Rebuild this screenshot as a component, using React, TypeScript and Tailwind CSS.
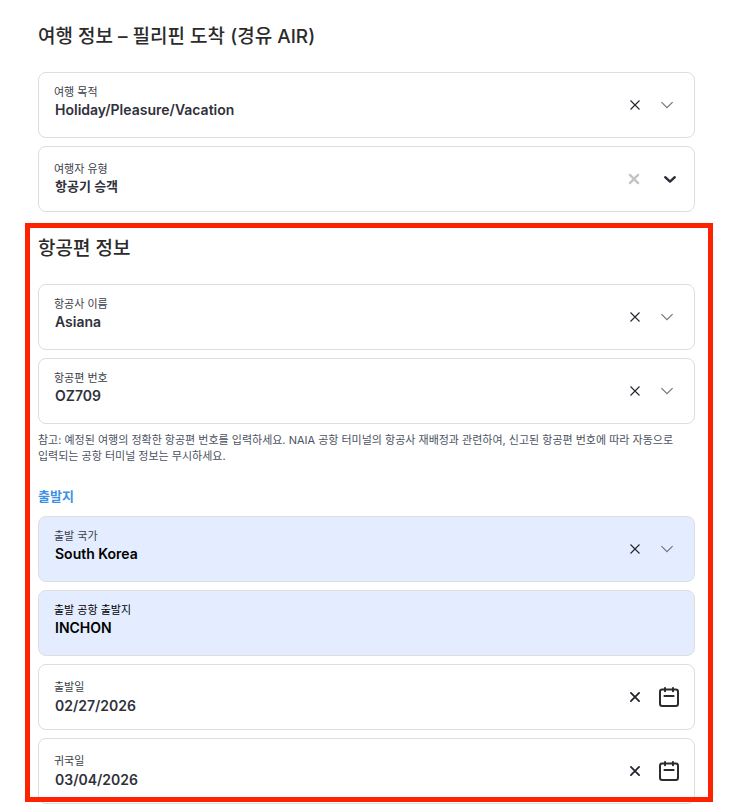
import { useState } from "react";
import type { ReactNode } from "react";
import clsx from "clsx";

type Variant = "picker" | "bold" | "date";

const cardPadding: Record<Variant, string> = {
  picker: "gap-5 pr-5",
  bold: "gap-[22px] pr-4",
  date: "gap-[18px] pr-[15px]",
};

const controlSize: Record<Variant, string> = {
  picker: "h-5 text-sm leading-5",
  bold: "h-[18px] text-[13px] leading-[18px]",
  date: "h-[22px] text-sm leading-[22px]",
};

function CrossIcon({ variant }: { variant: Variant }) {
  if (variant === "picker") {
    return (
      <svg className="h-[10px] w-[10px]" viewBox="0 0 10 10" fill="none" stroke="currentColor" strokeWidth="1.1" aria-hidden="true">
        <path d="M0.5 0.5 9.5 9.5M9.5 0.5 0.5 9.5" />
      </svg>
    );
  }
  return (
    <svg
      className="h-3 w-3"
      viewBox="0 0 12 12"
      fill="none"
      stroke="currentColor"
      strokeWidth={variant === "bold" ? 2.4 : 1.8}
      strokeLinecap="round"
      aria-hidden="true"
    >
      <path d="M1.9 1.9 10.1 10.1M10.1 1.9 1.9 10.1" />
    </svg>
  );
}

function TrailingIcon({ variant }: { variant: Variant }) {
  if (variant === "date") {
    return (
      <svg className="h-5 w-5" viewBox="0 0 20 20" fill="none" stroke="#2b2b2b" strokeWidth="2" strokeLinecap="round" aria-hidden="true">
        <rect x="1" y="2.6" width="18" height="16.4" rx="2.2" />
        <path d="M6 1V4.2M14 1V4.2M5.4 9H14.6" />
      </svg>
    );
  }
  if (variant === "bold") {
    return (
      <svg className="h-4 w-4" viewBox="0 0 16 16" fill="none" stroke="#2b2d38" strokeWidth="2.4" strokeLinecap="round" strokeLinejoin="round" aria-hidden="true">
        <path d="M3.2 6.2 8 10.6 12.8 6.2" />
      </svg>
    );
  }
  return (
    <svg className="h-[14px] w-[14px]" viewBox="0 0 14 14" fill="none" stroke="#77777d" strokeWidth="1.2" aria-hidden="true">
      <path d="M1.4 4.1 7 9.7 12.6 4.1" />
    </svg>
  );
}

interface FieldProps {
  id: string;
  label: string;
  initial: string;
  variant?: Variant;
  kind?: "select" | "text";
  filled?: boolean;
}

function Field({ id, label, initial, variant = "picker", kind = "select", filled = false }: FieldProps) {
  const [value, setValue] = useState(initial);
  const hasActions = kind === "select" || variant === "date";
  const control = clsx(
    "block w-full appearance-none bg-transparent pl-px font-semibold outline-none",
    controlSize[variant],
    filled ? "text-black" : "text-[#2f313b]",
  );

  return (
    <div
      className={clsx(
        "flex h-[66px] rounded-lg border border-[#dedede] pl-[15px]",
        cardPadding[variant],
        filled ? "bg-[#e4edff]" : "bg-white",
      )}
    >
      <div className={clsx("min-w-0 flex-1", variant === "picker" ? "pt-[11px]" : "pt-[14px]")}>
        <label htmlFor={id} className={clsx("block text-[11px] leading-4", filled && kind === "text" ? "text-black" : "text-[#3b3e48]")}>
          {label}
        </label>
        {kind === "select" ? (
          <select id={id} value={value} onChange={(e) => setValue(e.target.value)} className={control}>
            <option value="" />
            <option value={initial}>{initial}</option>
          </select>
        ) : (
          <input id={id} type="text" value={value} onChange={(e) => setValue(e.target.value)} className={control} />
        )}
      </div>
      {hasActions && (
        <>
          <button
            type="button"
            aria-label={`${label} 지우기`}
            onClick={() => setValue("")}
            className={variant === "bold" ? "text-[#c4c4c4]" : "text-[#23252d]"}
          >
            <CrossIcon variant={variant} />
          </button>
          <span className="flex items-center">
            <TrailingIcon variant={variant} />
          </span>
        </>
      )}
    </div>
  );
}

function FieldGroup({ children }: { children: ReactNode }) {
  return <div className="flex flex-col gap-2">{children}</div>;
}

export default function App() {
  return (
    <main className="bg-white pt-[25px] pr-[39px] pb-[6px] pl-[38px] font-['Inter','Noto_Sans_CJK_KR',sans-serif]">
      <h1 className="mb-[23px] text-[19px] leading-6 font-medium text-[#2b2b2b]">여행 정보 – 필리핀 도착 (경유 AIR)</h1>
      <FieldGroup>
        <Field id="purpose" label="여행 목적" initial="Holiday/Pleasure/Vacation" />
        <Field id="traveller" label="여행자 유형" initial="항공기 승객" variant="bold" />
      </FieldGroup>

      <section className="relative mt-[11px] pt-[14px]">
        <h2 className="mb-[23px] text-[19px] leading-6 font-medium text-[#2b2b2b]">항공편 정보</h2>
        <FieldGroup>
          <Field id="airline" label="항공사 이름" initial="Asiana" />
          <Field id="flight" label="항공편 번호" initial="OZ709" />
        </FieldGroup>
        <p className="mt-2 text-[11px] leading-4 break-keep text-[#4b5262]">
          참고: 예정된 여행의 정확한 항공편 번호를 입력하세요. NAIA 공항 터미널의 항공사 재배정과 관련하여, 신고된 항공편 번호에 따라 자동으로 입력되는 공항 터미널 정보는 무시하세요.
        </p>
        <h3 className="mt-[22px] mb-[10px] text-[13px] leading-5 font-bold text-[#3d92e3]">출발지</h3>
        <FieldGroup>
          <Field id="country" label="출발 국가" initial="South Korea" filled />
          <Field id="airport" label="출발 공항 출발지" initial="INCHON" kind="text" filled />
          <Field id="departure" label="출발일" initial="02/27/2026" kind="text" variant="date" />
          <Field id="return" label="귀국일" initial="03/04/2026" kind="text" variant="date" />
        </FieldGroup>
        <div className="pointer-events-none absolute top-0 -right-[18px] bottom-[2px] -left-[13px] border-5 border-[#ff2200]" />
      </section>
    </main>
  );
}
